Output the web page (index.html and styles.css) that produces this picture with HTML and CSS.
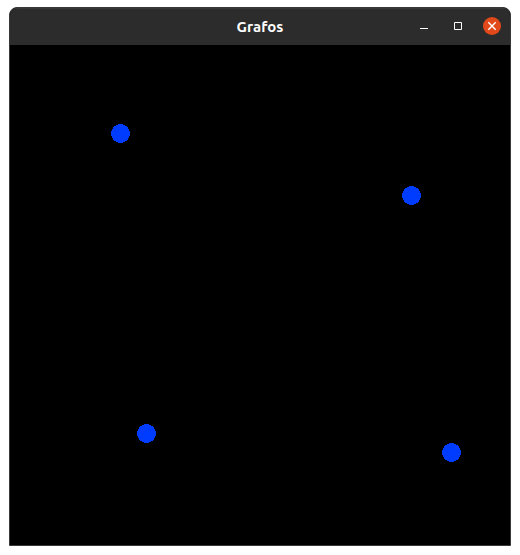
FILE: index.html
```html
<!DOCTYPE html>
<html lang="pt">
<head>
<meta charset="utf-8">
<meta name="viewport" content="width=device-width, initial-scale=1">
<title>Grafos</title>
<link rel="stylesheet" href="styles.css">
</head>
<body>
<main class="window">
  <header class="titlebar">
    <h1 class="title">Grafos</h1>
    <div class="controls">
      <button class="control" type="button" aria-label="Minimizar">
        <svg viewBox="0 0 18 18" aria-hidden="true"><path d="M5 11.5h8"/></svg>
      </button>
      <button class="control" type="button" aria-label="Maximizar">
        <svg viewBox="0 0 18 18" aria-hidden="true"><path d="M5.5 5.5h7v7h-7z"/></svg>
      </button>
      <button class="control close" type="button" aria-label="Fechar">
        <svg viewBox="0 0 18 18" aria-hidden="true"><path d="M5.300 5.300l7.400 7.400M12.700 5.300l-7.400 7.400"/></svg>
      </button>
    </div>
  </header>
  <svg class="graph" viewBox="0 0 500 500" role="img" aria-label="Grafos">
    <circle cx="110.5" cy="88.5" r="9.5"/>
    <circle cx="401.5" cy="150.5" r="9.5"/>
    <circle cx="136.5" cy="388.5" r="9.5"/>
    <circle cx="441.5" cy="407.5" r="9.5"/>
  </svg>
</main>
</body>
</html>
```

FILE: styles.css
```css
* {
  box-sizing: border-box;
}

body {
  margin: 0;
  padding: 7px 9px 9px;
  background: #fff;
  font-family: Ubuntu, "Noto Sans", sans-serif;
}

.window {
  overflow: hidden;
  border: 1px solid #383838;
  border-radius: 8px 8px 0 0;
  background: #000;
}

.titlebar {
  display: grid;
  grid-template-columns: 1fr auto 1fr;
  align-items: center;
  min-height: 37px;
  padding: 0 9px;
  border-top: 1px solid #383838;
  background: #2c2c2c;
}

.title {
  grid-column: 2;
  margin: 0;
  color: #fff;
  font-size: 15px;
  font-weight: 700;
  line-height: 20px;
}

.controls {
  display: flex;
  justify-content: flex-end;
  gap: 16px;
  padding-bottom: 2px;
}

.control {
  width: 18px;
  height: 18px;
  padding: 0;
  border: 0;
  border-radius: 50%;
  background: transparent;
}

.control svg {
  display: block;
  width: 100%;
  height: 100%;
  fill: none;
  stroke: #fff;
}

.close {
  background: #e2491a;
}

.close svg {
  stroke-width: 1.4;
}

.graph {
  display: block;
  width: 100%;
  background: #000;
  fill: #003cff;
  shape-rendering: crispEdges;
}
```
